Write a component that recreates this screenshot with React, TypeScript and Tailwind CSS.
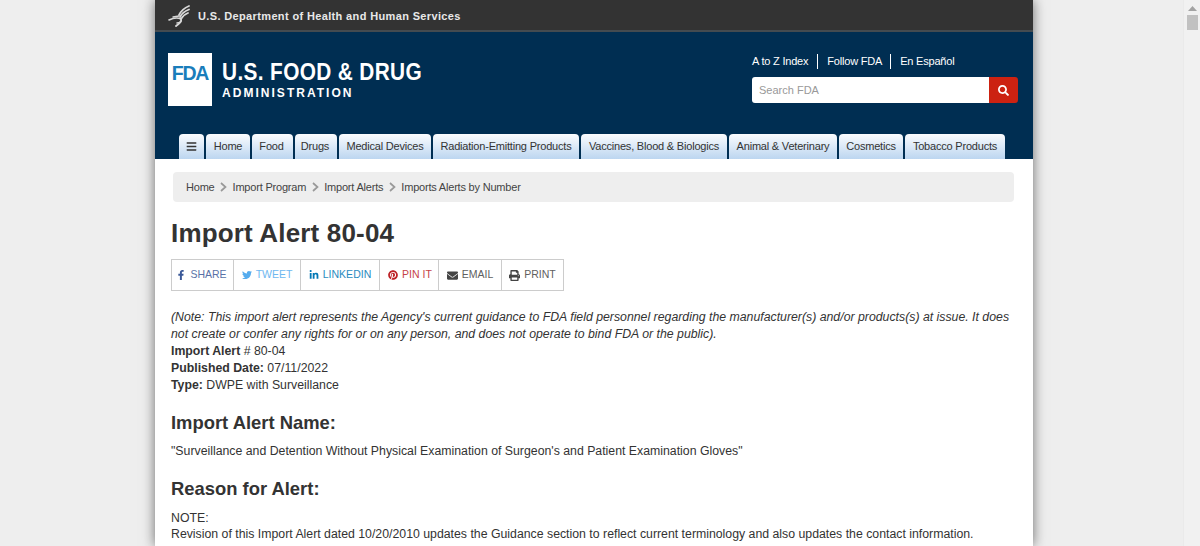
import { FaFacebookF, FaTwitter, FaLinkedinIn, FaPinterest, FaEnvelope, FaPrint, FaSearch, FaBars } from "react-icons/fa";

const nav = [
  ["Home", "w-[44px]"],
  ["Food", "w-[41px] pr-[2px]"],
  ["Drugs", "w-[42px] pr-[2px]"],
  ["Medical Devices", "w-[92px]"],
  ["Radiation-Emitting Products", "w-[146px]"],
  ["Vaccines, Blood & Biologics", "w-[146px]"],
  ["Animal & Veterinary", "w-[108px]"],
  ["Cosmetics", "w-[64px]"],
  ["Tobacco Products", "w-[100px]"],
];

function Tab({ className, children }: { className: string; children: React.ReactNode }) {
  return (
    <div className={`h-[25px] rounded-t-[4px] bg-gradient-to-b from-[#fbfcfe] to-[#bcd6f0] flex items-center justify-center text-[11px] tracking-[-0.2px] text-[#333] whitespace-nowrap ${className}`}>
      {children}
    </div>
  );
}

function Chevron() {
  return (
    <svg width="7" height="10" viewBox="0 0 7 10" className="mx-[5.5px]">
      <path d="M1 1 L5.5 5 L1 9" fill="none" stroke="#999" strokeWidth="1.7" />
    </svg>
  );
}

const shares = [
  [FaFacebookF, "SHARE", "text-[#3b5998]", "w-[61px] pr-[2px]", 10],
  [FaTwitter, "TWEET", "text-[#55acee]", "w-[67px]", 10],
  [FaLinkedinIn, "LINKEDIN", "text-[#0077b5]", "w-[79px]", 10],
  [FaPinterest, "PIN IT", "text-[#bd2126]", "w-[59px] pl-[2px]", 10],
  [FaEnvelope, "EMAIL", "text-[#444]", "w-[63px]", 11],
  [FaPrint, "PRINT", "text-[#444]", "w-[62px]", 11],
] as const;

export default function App() {
  return (
    <div className="h-[546px] overflow-hidden flex bg-[#eeeeee] font-['Liberation_Sans',Arial,sans-serif] text-[#333]">
      <div className="flex-1 min-w-0 pl-[155px]">
        <div className="w-[878px] h-[546px] bg-white shadow-[0_0_12px_rgba(0,0,0,0.55)] overflow-hidden">
          <div className="h-[32px] bg-[#333333] border-b-[2px] border-[#444b50] flex items-center pl-[13px] pt-[2px] text-[#f0f0f0]">
            <svg width="23" height="24" viewBox="0 0 23 24" className="mr-[7px]">
              <g fill="none" stroke="#d8d8d8" strokeLinecap="round">
                <path d="M21 2 C16 4 13 7 11 11" strokeWidth="1.8" />
                <path d="M21 5.5 C17 7 14 9 12 13" strokeWidth="1.8" />
                <path d="M20 9 C17 10 15 12 13 15" strokeWidth="1.8" />
                <path d="M1 16 C5 14 9 13 13 15 C14 17 12 19 9 19" strokeWidth="1.6" />
                <path d="M8 22 C10 20 13 19 13 17" strokeWidth="1.8" />
                <path d="M5 13 L11 12" strokeWidth="1.3" />
              </g>
            </svg>
            <span className="text-[11px] font-bold tracking-[0.36px] text-[#e8e8e8]">U.S. Department of Health and Human Services</span>
          </div>

          <div className="h-[127px] bg-[#002e52] flex flex-col">
            <div className="h-[102px] flex justify-between">
              <div className="flex pl-[13px] pt-[21px]">
                <div className="w-[44px] h-[53px] bg-white flex items-start justify-center pt-[11px]">
                  <span className="text-[19.5px] font-bold text-[#1a7dbb] tracking-[-1.2px] leading-none">FDA</span>
                </div>
                <div className="ml-[10px] pt-[7px]">
                  <div className="text-[23px] leading-[24px] font-bold text-white tracking-[0.4px] whitespace-nowrap origin-left scale-x-[0.905]">U.S. FOOD &amp; DRUG</div>
                  <div className="text-[12px] leading-[13px] mt-[3px] font-bold text-white tracking-[2.03px] whitespace-nowrap">ADMINISTRATION</div>
                </div>
              </div>
              <div className="w-[266px] mr-[15px] pt-[21px]">
                <div className="flex items-center h-[16px] text-[11px] text-white tracking-[-0.2px] whitespace-nowrap">
                  <span className="pr-[9px] border-r border-white leading-[15px]">A to Z Index</span>
                  <span className="pl-[9px] pr-[8px] border-r border-white leading-[15px]">Follow FDA</span>
                  <span className="pl-[9px] leading-[15px]">En Español</span>
                </div>
                <div className="flex mt-[8px] h-[26px]">
                  <div className="flex-1 bg-white rounded-l-[3px] flex items-center pl-[7px] text-[11px] text-[#999]">Search FDA</div>
                  <div className="w-[29px] bg-[#cc2211] rounded-r-[3px] flex items-center justify-center">
                    <FaSearch className="text-white" size={11} />
                  </div>
                </div>
              </div>
            </div>
            <div className="flex gap-[2px] pl-[24px]">
              <Tab className="w-[25px]"><FaBars size={11} className="text-[#333]" /></Tab>
              {nav.map(([t, w]) => (
                <Tab key={t} className={w}>{t}</Tab>
              ))}
            </div>
          </div>

          <div className="pl-[16px] pr-[19px]">
            <div className="ml-[2px] mt-[13px] h-[30px] rounded-[4px] bg-[#eeeeee] flex items-center pl-[13px] text-[11px] tracking-[-0.2px] text-[#444]">
              <span>Home</span><Chevron /><span>Import Program</span><Chevron /><span>Import Alerts</span><Chevron /><span>Imports Alerts by Number</span>
            </div>
            <h1 className="mt-[15px] text-[26px] tracking-[0.17px] leading-[32px] font-bold text-[#333]">Import Alert 80-04</h1>
            <div className="mt-[10px] flex w-fit border border-[#ccc] h-[32px]">
              {shares.map(([Icon, label, color, w, size], i) => (
                <div key={label} className={`${w} ${color} flex items-center justify-center gap-[4px] text-[10.5px] ${i ? "border-l border-[#ccc]" : ""}`}>
                  <Icon size={size} />
                  <span className="opacity-85">{label}</span>
                </div>
              ))}
            </div>
            <div className="mt-[18px] text-[12.3px] leading-[17px] text-[#333]">
              <p className="italic">(Note: This import alert represents the Agency's current guidance to FDA field personnel regarding the manufacturer(s) and/or products(s) at issue. It does not create or confer any rights for or on any person, and does not operate to bind FDA or the public).</p>
              <p><b>Import Alert</b> # 80-04</p>
              <p><b>Published Date:</b> 07/11/2022</p>
              <p><b>Type:</b> DWPE with Surveillance</p>
            </div>
            <h2 className="mt-[17px] text-[18.4px] leading-[24px] font-bold">Import Alert Name:</h2>
            <p className="mt-[8px] text-[12.3px] leading-[17px]">"Surveillance and Detention Without Physical Examination of Surgeon's and Patient Examination Gloves"</p>
            <h2 className="mt-[17px] text-[18.4px] leading-[24px] font-bold">Reason for Alert:</h2>
            <div className="mt-[9px] text-[12.3px] leading-[16px]">
              <p>NOTE:</p>
              <p>Revision of this Import Alert dated 10/20/2010 updates the Guidance section to reflect current terminology and also updates the contact information.</p>
            </div>
          </div>
        </div>
      </div>
      <div className="w-[17px] bg-[#f1f1f1] flex flex-col items-center border-l border-[#eaeaea]">
        <svg width="9" height="5" viewBox="0 0 9 5" className="mt-[6px]"><path d="M0 5 L4.5 0 L9 5 Z" fill="#a3a3a3" /></svg>
        <div className="mt-[4px] w-[11px] h-[15px] bg-[#c1c1c1]" />
      </div>
    </div>
  );
}
